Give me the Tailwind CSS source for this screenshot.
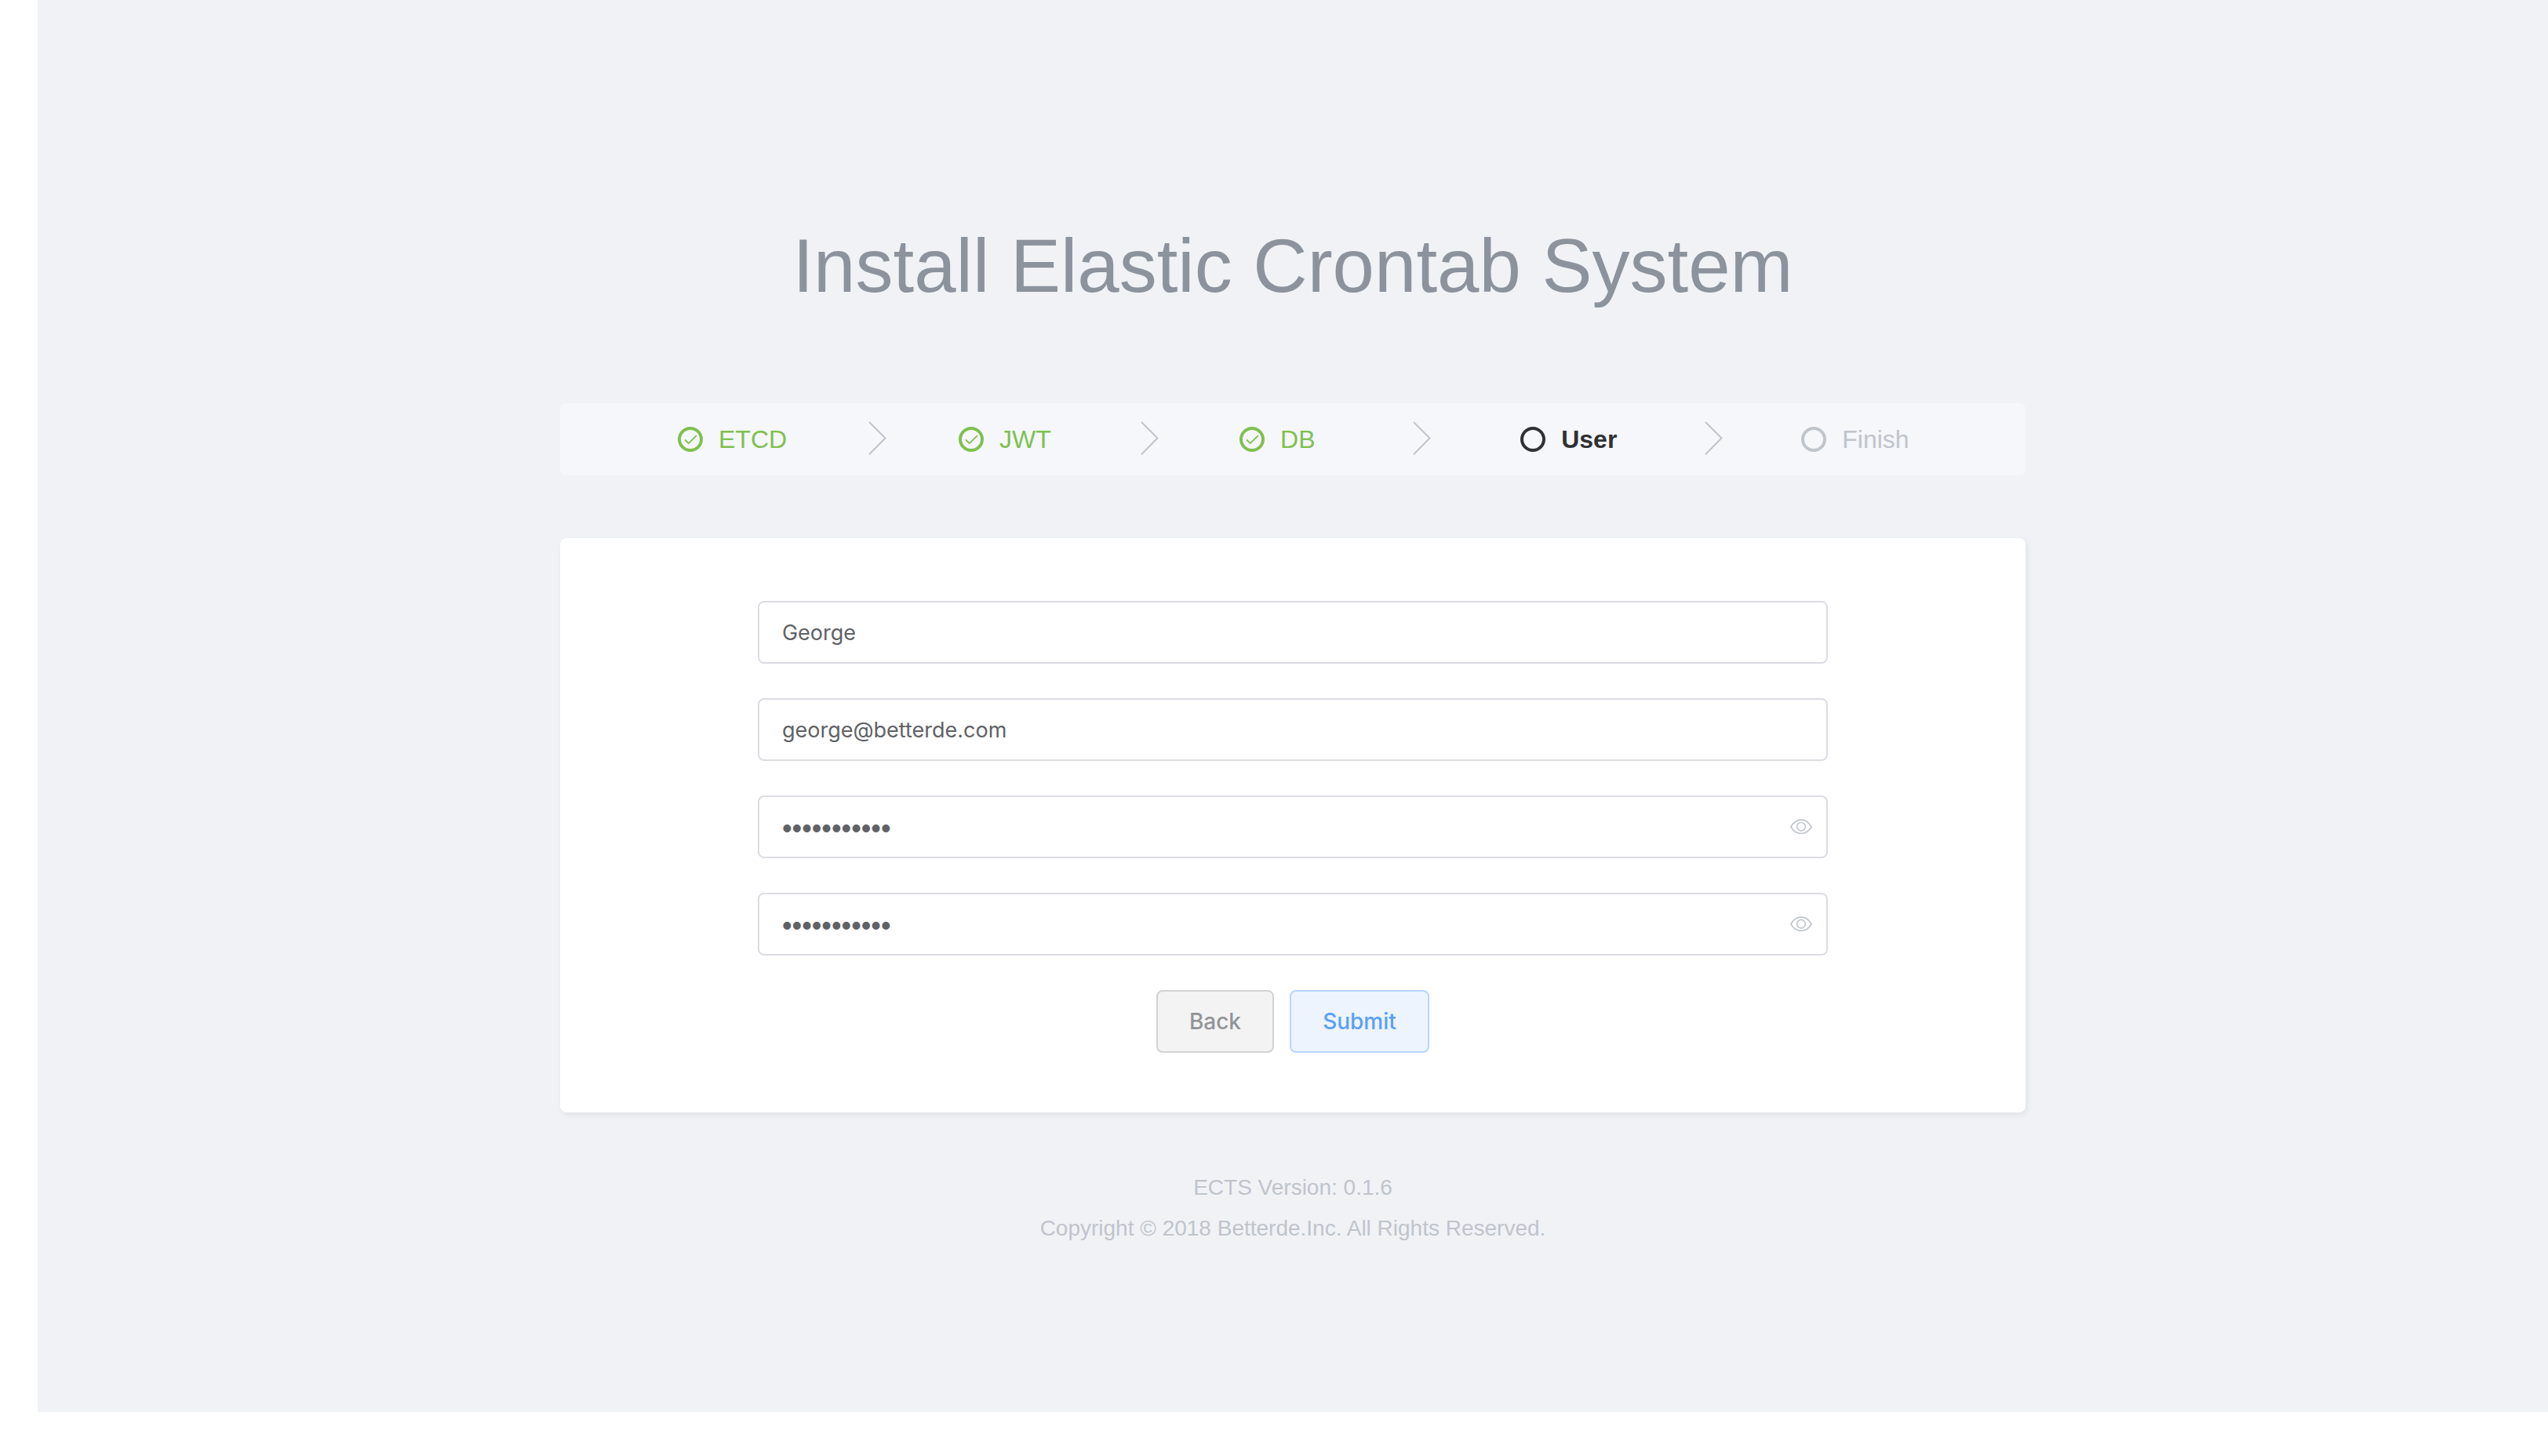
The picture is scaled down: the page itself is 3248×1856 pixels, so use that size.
<!DOCTYPE html>
<html lang="en">
<head>
<meta charset="utf-8">
<meta name="viewport" content="width=device-width, initial-scale=1">
<title>Install Elastic Crontab System</title>
<script src="https://cdn.jsdelivr.net/npm/@tailwindcss/browser@4"></script>
</head>
<body class="bg-white font-['Liberation_Sans',Arial,sans-serif]">
<svg class="hidden">
  <symbol id="done" viewBox="0 0 32 32"><circle cx="16" cy="16" r="14" fill="none" stroke="currentColor" stroke-width="4"/><path d="M9.5 17l4.2 4.2L23.4 11.6" fill="none" stroke="currentColor" stroke-width="1.8" stroke-linecap="round" stroke-linejoin="round"/></symbol>
  <symbol id="open" viewBox="0 0 32 32"><circle cx="16" cy="16" r="14" fill="none" stroke="currentColor" stroke-width="4"/></symbol>
  <symbol id="arrow" viewBox="0 0 34 48"><path d="M12 2l20.5 20.5L12 43.2" fill="none" stroke="currentColor" stroke-width="2"/></symbol>
  <symbol id="eye" viewBox="0 0 28 20"><path d="M.9 10C4.2 4.2 8.700 1.100 14 1.100S23.800 4.200 27.100 10C23.800 15.800 19.300 18.500 14 18.500S4.200 15.800.9 10z" fill="none" stroke="currentColor" stroke-width="1.6" stroke-linejoin="round"/><circle cx="14" cy="9.800" r="5.300" fill="none" stroke="currentColor" stroke-width="1.600"/></symbol>
</svg>
<div class="flex min-h-screen pb-14 pl-12">
  <main class="flex flex-1 flex-col items-center bg-[#f0f2f6] pt-[279px]">
    <h1 class="text-[96px] leading-[120px] text-[#8c939d]">Install Elastic Crontab System</h1>

    <ol class="mt-[115px] flex w-[58.4%] rounded-lg bg-[#f5f7fb] pr-[4.65%] pl-[4.7%] py-[26px] text-[32px] leading-10">
      <li class="flex flex-1 items-center text-[#80c050]">
        <svg class="mr-5 size-8"><use href="#done"/></svg>ETCD
        <span class="flex flex-1 justify-center text-[#c0c4cc]"><svg class="-my-1 h-12 w-[34px]"><use href="#arrow"/></svg></span>
      </li>
      <li class="flex flex-1 items-center text-[#80c050]">
        <svg class="mr-5 size-8"><use href="#done"/></svg>JWT
        <span class="flex flex-1 justify-center text-[#c0c4cc]"><svg class="-my-1 h-12 w-[34px]"><use href="#arrow"/></svg></span>
      </li>
      <li class="flex flex-1 items-center text-[#80c050]">
        <svg class="mr-5 size-8"><use href="#done"/></svg>DB
        <span class="flex flex-1 justify-center text-[#c0c4cc]"><svg class="-my-1 h-12 w-[34px]"><use href="#arrow"/></svg></span>
      </li>
      <li class="flex flex-1 items-center font-bold text-[#303133]" aria-current="step">
        <svg class="mr-5 size-8"><use href="#open"/></svg>User
        <span class="flex flex-1 justify-center text-[#c0c4cc]"><svg class="-my-1 h-12 w-[34px]"><use href="#arrow"/></svg></span>
      </li>
      <li class="flex items-center text-[#c0c4cc]">
        <svg class="mr-5 size-8"><use href="#open"/></svg>Finish
      </li>
    </ol>

    <section class="mt-20 flex w-[58.4%] justify-center rounded-lg bg-white px-[25px] pt-20 pb-[76px] shadow-[2px_3px_8px_rgba(0,0,0,0.07)]">
      <form class="flex w-3/4 flex-col gap-11 font-[Inter,sans-serif] text-[28px] text-[#606266]">
        <input type="text" aria-label="Name" value="George" class="h-20 w-full rounded-lg border-2 border-[#dcdde4] bg-white px-[29px] text-[27px]">
        <input type="email" aria-label="Email" value="george@betterde.com" class="h-20 w-full rounded-lg border-2 border-[#dcdde4] bg-white px-[29px] text-[27px]">
        <div class="relative">
          <input type="password" aria-label="Password" value="password123" class="h-20 w-full rounded-lg border-2 border-[#dcdde4] bg-white px-[29px] pt-1 font-['Liberation_Sans',Arial,sans-serif] text-[36px]">
          <button type="button" aria-label="Show password" class="absolute inset-y-0 right-5 flex items-center text-[#c0c4cc]"><svg class="h-5 w-7"><use href="#eye"/></svg></button>
        </div>
        <div class="relative">
          <input type="password" aria-label="Confirm password" value="password123" class="h-20 w-full rounded-lg border-2 border-[#dcdde4] bg-white px-[29px] pt-1 font-['Liberation_Sans',Arial,sans-serif] text-[36px]">
          <button type="button" aria-label="Show password" class="absolute inset-y-0 right-5 flex items-center text-[#c0c4cc]"><svg class="h-5 w-7"><use href="#eye"/></svg></button>
        </div>
        <div class="flex justify-center gap-5 font-medium">
          <button type="button" class="h-20 w-[150px] rounded-lg border-2 border-[#d3d3d5] bg-[#f3f3f4] text-[#929398]">Back</button>
          <button type="submit" class="h-20 w-[178px] rounded-lg border-2 border-[#b7d6fb] bg-[#edf4fe] text-[#5a9ff9]">Submit</button>
        </div>
      </form>
    </section>

    <footer class="mt-[70px] text-center text-[28px] leading-[52px] text-[#c0c4cc]">
      <p>ECTS Version: 0.1.6</p>
      <p>Copyright © 2018 Betterde.Inc. All Rights Reserved.</p>
    </footer>
  </main>
</div>
</body>
</html>
